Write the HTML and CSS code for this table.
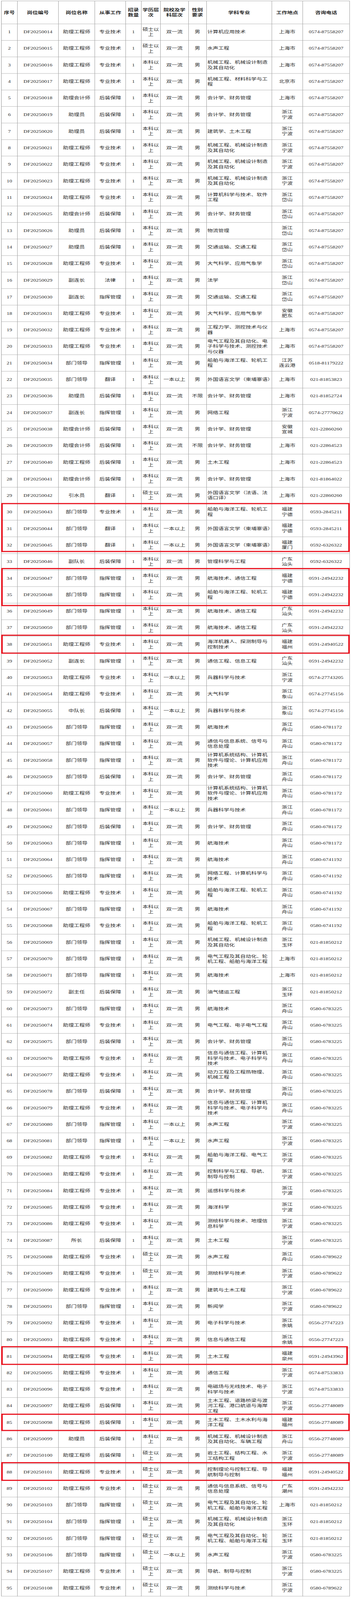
FILE: index.html
```html
<!DOCTYPE html>
<html lang="zh-CN">
<head>
<meta charset="utf-8">
<title>岗位表</title>
<link rel="stylesheet" href="styles.css">
</head>
<body>
<div class="page">
<div class="sheet">
<div class="row head"><div>序号</div><div>岗位编号</div><div>岗位名称</div><div>从事工作</div><div>招录数量</div><div>学历层次</div><div>院校及学<br>科层次</div><div>性别<br>要求</div><div>学科专业</div><div>工作地点</div><div>咨询电话</div></div>
<div class="row"><div>1</div><div>DF20250014</div><div>助理工程师</div><div>专业技术</div><div>1</div><div>硕士以上</div><div>双一流</div><div>男</div><div class="major">计算机应用技术</div><div>上海市</div><div>0574-87558207</div></div>
<div class="row"><div>2</div><div>DF20250015</div><div>助理工程师</div><div>专业技术</div><div>1</div><div>硕士以上</div><div>双一流</div><div>男</div><div class="major">水声工程</div><div>上海市</div><div>0574-87558207</div></div>
<div class="row"><div>3</div><div>DF20250016</div><div>助理工程师</div><div>专业技术</div><div>1</div><div>本科以上</div><div>双一流</div><div>男</div><div class="major">机械工程、机械设计制造及其自动化</div><div>上海市</div><div>0574-87558207</div></div>
<div class="row"><div>4</div><div>DF20250017</div><div>助理工程师</div><div>专业技术</div><div>1</div><div>本科以上</div><div>双一流</div><div>男</div><div class="major">机械工程、材料科学与工程</div><div>北京市</div><div>0574-87558207</div></div>
<div class="row"><div>5</div><div>DF20250018</div><div>助理会计师</div><div>后装保障</div><div>1</div><div>本科以上</div><div>双一流</div><div>男</div><div class="major">会计学、财务管理</div><div>上海市</div><div>0574-87558207</div></div>
<div class="row"><div>6</div><div>DF20250019</div><div>助理员</div><div>后装保障</div><div>1</div><div>本科以上</div><div>双一流</div><div>男</div><div class="major">会计学、财务管理</div><div>浙江<br>宁波</div><div>0574-87558207</div></div>
<div class="row"><div>7</div><div>DF20250020</div><div>助理员</div><div>后装保障</div><div>1</div><div>本科以上</div><div>双一流</div><div>男</div><div class="major">建筑学、土木工程</div><div>浙江<br>宁波</div><div>0574-87558207</div></div>
<div class="row"><div>8</div><div>DF20250021</div><div>助理工程师</div><div>专业技术</div><div>1</div><div>本科以上</div><div>双一流</div><div>男</div><div class="major">机械工程、机械设计制造及其自动化</div><div>浙江<br>宁波</div><div>0574-87558207</div></div>
<div class="row"><div>9</div><div>DF20250022</div><div>助理工程师</div><div>专业技术</div><div>1</div><div>本科以上</div><div>双一流</div><div>男</div><div class="major">机械工程、机械设计制造及其自动化</div><div>浙江<br>宁波</div><div>0574-87558207</div></div>
<div class="row"><div>10</div><div>DF20250023</div><div>助理工程师</div><div>专业技术</div><div>1</div><div>本科以上</div><div>双一流</div><div>男</div><div class="major">机械工程、机械设计制造及其自动化</div><div>浙江<br>宁波</div><div>0574-87558207</div></div>
<div class="row"><div>11</div><div>DF20250024</div><div>助理工程师</div><div>专业技术</div><div>1</div><div>本科以上</div><div>双一流</div><div>男</div><div class="major">计算机科学与技术、软件工程</div><div>浙江<br>岱山</div><div>0574-87558207</div></div>
<div class="row"><div>12</div><div>DF20250025</div><div>助理会计师</div><div>后装保障</div><div>1</div><div>本科以上</div><div>双一流</div><div>男</div><div class="major">会计学、财务管理</div><div>浙江<br>岱山</div><div>0574-87558207</div></div>
<div class="row"><div>13</div><div>DF20250026</div><div>助理员</div><div>后装保障</div><div>1</div><div>本科以上</div><div>双一流</div><div>男</div><div class="major">物流管理</div><div>浙江<br>岱山</div><div>0574-87558207</div></div>
<div class="row"><div>14</div><div>DF20250027</div><div>助理员</div><div>后装保障</div><div>1</div><div>本科以上</div><div>双一流</div><div>男</div><div class="major">交通运输、交通工程</div><div>浙江<br>岱山</div><div>0574-87558207</div></div>
<div class="row"><div>15</div><div>DF20250028</div><div>助理工程师</div><div>专业技术</div><div>1</div><div>本科以上</div><div>双一流</div><div>男</div><div class="major">大气科学、应用气象学</div><div>浙江<br>岱山</div><div>0574-87558207</div></div>
<div class="row"><div>16</div><div>DF20250029</div><div>副连长</div><div>法律</div><div>1</div><div>本科以上</div><div>双一流</div><div>男</div><div class="major">法学</div><div>浙江<br>岱山</div><div>0574-87558207</div></div>
<div class="row"><div>17</div><div>DF20250030</div><div>副连长</div><div>指挥管理</div><div>1</div><div>本科以上</div><div>双一流</div><div>男</div><div class="major">交通运输、交通工程</div><div>浙江<br>岱山</div><div>0574-87558207</div></div>
<div class="row"><div>18</div><div>DF20250031</div><div>助理工程师</div><div>专业技术</div><div>1</div><div>本科以上</div><div>双一流</div><div>男</div><div class="major">大气科学、应用气象学</div><div>安徽<br>肥东</div><div>0574-87558207</div></div>
<div class="row"><div>19</div><div>DF20250032</div><div>助理工程师</div><div>专业技术</div><div>1</div><div>本科以上</div><div>双一流</div><div>男</div><div class="major">工程力学、测控技术与仪器</div><div>上海市</div><div>0574-87558207</div></div>
<div class="row"><div>20</div><div>DF20250033</div><div>助理工程师</div><div>专业技术</div><div>1</div><div>本科以上</div><div>双一流</div><div>男</div><div class="major">电气工程及其自动化、电子科学与技术、测控技术与仪器</div><div>上海市</div><div>0574-87558207</div></div>
<div class="row"><div>21</div><div>DF20250034</div><div>部门领导</div><div>指挥管理</div><div>1</div><div>本科以上</div><div>双一流</div><div>男</div><div class="major">船舶与海洋工程、轮机工程</div><div>江苏<br>连云港</div><div>0518-81179222</div></div>
<div class="row"><div>22</div><div>DF20250035</div><div>部门领导</div><div>翻译</div><div>1</div><div>本科以上</div><div>一本以上</div><div>男</div><div class="major">外国语言文学（柬埔寨语）</div><div>上海市</div><div>021-81853823</div></div>
<div class="row"><div>23</div><div>DF20250036</div><div>助理员</div><div>后装保障</div><div>1</div><div>本科以上</div><div>双一流</div><div>不限</div><div class="major">会计学、财务管理</div><div>上海市</div><div>021-81852724</div></div>
<div class="row"><div>24</div><div>DF20250037</div><div>副连长</div><div>指挥管理</div><div>1</div><div>本科以上</div><div>双一流</div><div>男</div><div class="major">网络工程</div><div>浙江<br>宁波</div><div>0574-27770622</div></div>
<div class="row"><div>25</div><div>DF20250038</div><div>助理会计师</div><div>后装保障</div><div>1</div><div>本科以上</div><div>双一流</div><div>男</div><div class="major">会计学、财务管理</div><div>安徽<br>宣城</div><div>021-22860260</div></div>
<div class="row"><div>26</div><div>DF20250039</div><div>助理会计师</div><div>后装保障</div><div>1</div><div>本科以上</div><div>双一流</div><div>不限</div><div class="major">会计学、财务管理</div><div>上海市</div><div>021-22864523</div></div>
<div class="row"><div>27</div><div>DF20250040</div><div>助理工程师</div><div>后装保障</div><div>1</div><div>本科以上</div><div>双一流</div><div>男</div><div class="major">土木工程</div><div>上海市</div><div>021-22864523</div></div>
<div class="row"><div>28</div><div>DF20250041</div><div>助理会计师</div><div>后装保障</div><div>1</div><div>本科以上</div><div>双一流</div><div>男</div><div class="major">会计学、财务管理</div><div>上海市</div><div>021-81864022</div></div>
<div class="row"><div>29</div><div>DF20250042</div><div>引水员</div><div>翻译</div><div>1</div><div>硕士以上</div><div>双一流</div><div>男</div><div class="major">外国语言文学（法语、法语口译）</div><div>上海市</div><div>021-22860260</div></div>
<div class="flag f1">
<div class="row"><div>30</div><div>DF20250043</div><div>部门领导</div><div>专业技术</div><div>1</div><div>本科以上</div><div>双一流</div><div>男</div><div class="major">船舶与海洋工程、轮机工程</div><div>福建<br>宁德</div><div>0593-2845211</div></div>
<div class="row"><div>31</div><div>DF20250044</div><div>部门领导</div><div>翻译</div><div>1</div><div>本科以上</div><div>一本以上</div><div>男</div><div class="major">外国语言文学（柬埔寨语）</div><div>福建<br>宁德</div><div>0593-2845211</div></div>
<div class="row"><div>32</div><div>DF20250045</div><div>部门领导</div><div>翻译</div><div>1</div><div>本科以上</div><div>一本以上</div><div>男</div><div class="major">外国语言文学（柬埔寨语）</div><div>福建<br>厦门</div><div>0592-6326322</div></div>
</div>
<div class="row"><div>33</div><div>DF20250046</div><div>副队长</div><div>后装保障</div><div>1</div><div>本科以上</div><div>双一流</div><div>男</div><div class="major">管理科学与工程</div><div>广东<br>汕头</div><div>0592-6326322</div></div>
<div class="flag f2">
<div class="row"><div>34</div><div>DF20250047</div><div>部门领导</div><div>指挥管理</div><div>1</div><div>本科以上</div><div>双一流</div><div>男</div><div class="major">航海技术、通信工程</div><div>福建<br>宁德</div><div>0591-24942232</div></div>
<div class="row"><div>35</div><div>DF20250048</div><div>部门领导</div><div>指挥管理</div><div>1</div><div>本科以上</div><div>双一流</div><div>男</div><div class="major">船舶与海洋工程、轮机工程</div><div>福建<br>宁德</div><div>0591-24942232</div></div>
</div>
<div class="row"><div>36</div><div>DF20250049</div><div>部门领导</div><div>指挥管理</div><div>1</div><div>本科以上</div><div>双一流</div><div>男</div><div class="major">航海技术、通信工程</div><div>广东<br>汕头</div><div>0591-24942232</div></div>
<div class="row"><div>37</div><div>DF20250050</div><div>部门领导</div><div>指挥管理</div><div>1</div><div>本科以上</div><div>双一流</div><div>男</div><div class="major">航海技术、通信工程</div><div>广东<br>汕头</div><div>0591-24942232</div></div>
<div class="flag f3">
<div class="row"><div>38</div><div>DF20250051</div><div>助理工程师</div><div>专业技术</div><div>1</div><div>本科以上</div><div>双一流</div><div>男</div><div class="major">海洋机器人、探测制导与控制技术</div><div>福建<br>福州</div><div>0591-24940522</div></div>
</div>
<div class="row"><div>39</div><div>DF20250052</div><div>副连长</div><div>指挥管理</div><div>1</div><div>本科以上</div><div>双一流</div><div>男</div><div class="major">通信工程、信息工程</div><div>广东<br>汕头</div><div>0591-24942232</div></div>
<div class="row"><div>40</div><div>DF20250053</div><div>助理工程师</div><div>专业技术</div><div>1</div><div>本科以上</div><div>一本以上</div><div>男</div><div class="major">兵器科学与技术</div><div>浙江<br>宁波</div><div>0574-27743205</div></div>
<div class="row"><div>41</div><div>DF20250054</div><div>助理工程师</div><div>专业技术</div><div>1</div><div>本科以上</div><div>双一流</div><div>男</div><div class="major">大气科学</div><div>浙江<br>象山</div><div>0574-27745156</div></div>
<div class="row"><div>42</div><div>DF20250055</div><div>中队长</div><div>后装保障</div><div>1</div><div>本科以上</div><div>一本以上</div><div>男</div><div class="major">兵器科学与技术</div><div>浙江<br>象山</div><div>0574-27745156</div></div>
<div class="row"><div>43</div><div>DF20250056</div><div>部门领导</div><div>指挥管理</div><div>1</div><div>本科以上</div><div>双一流</div><div>男</div><div class="major">航海技术</div><div>浙江<br>舟山</div><div>0580-6781172</div></div>
<div class="row"><div>44</div><div>DF20250057</div><div>部门领导</div><div>指挥管理</div><div>1</div><div>本科以上</div><div>双一流</div><div>男</div><div class="major">通信与信息系统、信号与信息处理</div><div>浙江<br>舟山</div><div>0580-6781172</div></div>
<div class="row"><div>45</div><div>DF20250058</div><div>部门领导</div><div>指挥管理</div><div>1</div><div>本科以上</div><div>双一流</div><div>男</div><div class="major">计算机系统结构、计算机软件与理论、计算机应用技术</div><div>浙江<br>舟山</div><div>0580-6781172</div></div>
<div class="row"><div>46</div><div>DF20250059</div><div>部门领导</div><div>后装保障</div><div>1</div><div>本科以上</div><div>双一流</div><div>男</div><div class="major">会计学、财务管理</div><div>浙江<br>舟山</div><div>0580-6781172</div></div>
<div class="row"><div>47</div><div>DF20250060</div><div>助理工程师</div><div>专业技术</div><div>1</div><div>本科以上</div><div>双一流</div><div>男</div><div class="major">计算机系统结构、计算机软件与理论、计算机应用技术</div><div>浙江<br>舟山</div><div>0580-6781172</div></div>
<div class="row"><div>48</div><div>DF20250061</div><div>部门领导</div><div>指挥管理</div><div>1</div><div>本科以上</div><div>一本以上</div><div>男</div><div class="major">兵器科学与技术</div><div>浙江<br>舟山</div><div>0580-6781172</div></div>
<div class="row"><div>49</div><div>DF20250062</div><div>部门领导</div><div>后装保障</div><div>1</div><div>本科以上</div><div>双一流</div><div>男</div><div class="major">会计学、财务管理</div><div>浙江<br>舟山</div><div>0580-6781172</div></div>
<div class="row"><div>50</div><div>DF20250063</div><div>部门领导</div><div>指挥管理</div><div>1</div><div>本科以上</div><div>双一流</div><div>男</div><div class="major">航海技术</div><div>浙江<br>舟山</div><div>0580-6781172</div></div>
<div class="row"><div>51</div><div>DF20250064</div><div>部门领导</div><div>指挥管理</div><div>1</div><div>本科以上</div><div>双一流</div><div>男</div><div class="major">航海技术</div><div>浙江<br>舟山</div><div>0580-6741192</div></div>
<div class="row"><div>52</div><div>DF20250065</div><div>部门领导</div><div>指挥管理</div><div>1</div><div>本科以上</div><div>双一流</div><div>男</div><div class="major">网络工程、计算机科学与技术</div><div>浙江<br>舟山</div><div>0580-6741192</div></div>
<div class="row"><div>53</div><div>DF20250066</div><div>助理工程师</div><div>专业技术</div><div>1</div><div>本科以上</div><div>双一流</div><div>男</div><div class="major">船舶与海洋工程、轮机工程</div><div>浙江<br>舟山</div><div>0580-6741192</div></div>
<div class="row"><div>54</div><div>DF20250067</div><div>部门领导</div><div>指挥管理</div><div>1</div><div>本科以上</div><div>双一流</div><div>男</div><div class="major">航海技术</div><div>浙江<br>舟山</div><div>0580-6741192</div></div>
<div class="row"><div>55</div><div>DF20250068</div><div>助理工程师</div><div>专业技术</div><div>1</div><div>本科以上</div><div>双一流</div><div>男</div><div class="major">船舶与海洋工程、轮机工程</div><div>浙江<br>舟山</div><div>0580-6741192</div></div>
<div class="row"><div>56</div><div>DF20250069</div><div>部门领导</div><div>指挥管理</div><div>1</div><div>本科以上</div><div>双一流</div><div>男</div><div class="major">机械工程、机械设计制造及其自动化</div><div>浙江<br>玉环</div><div>021-81850212</div></div>
<div class="row"><div>57</div><div>DF20250070</div><div>部门领导</div><div>指挥管理</div><div>1</div><div>本科以上</div><div>双一流</div><div>男</div><div class="major">电气工程及其自动化、轮机工程、船舶与海洋工程</div><div>上海市</div><div>021-81850212</div></div>
<div class="row"><div>58</div><div>DF20250071</div><div>部门领导</div><div>指挥管理</div><div>1</div><div>本科以上</div><div>双一流</div><div>男</div><div class="major">航海技术</div><div>上海市</div><div>021-81850212</div></div>
<div class="row"><div>59</div><div>DF20250072</div><div>副主任</div><div>后装保障</div><div>1</div><div>本科以上</div><div>双一流</div><div>男</div><div class="major">油气储运工程</div><div>浙江<br>玉环</div><div>021-81850212</div></div>
<div class="row"><div>60</div><div>DF20250073</div><div>部门领导</div><div>指挥管理</div><div>1</div><div>本科以上</div><div>双一流</div><div>男</div><div class="major">航海技术</div><div>浙江<br>舟山</div><div>0580-6783225</div></div>
<div class="row"><div>61</div><div>DF20250074</div><div>助理工程师</div><div>专业技术</div><div>1</div><div>本科以上</div><div>双一流</div><div>男</div><div class="major">电气工程、电子电气工程</div><div>浙江<br>舟山</div><div>0580-6783225</div></div>
<div class="row"><div>62</div><div>DF20250075</div><div>部门领导</div><div>后装保障</div><div>1</div><div>本科以上</div><div>双一流</div><div>男</div><div class="major">会计学、财务管理</div><div>浙江<br>舟山</div><div>0580-6783225</div></div>
<div class="row"><div>63</div><div>DF20250076</div><div>助理工程师</div><div>专业技术</div><div>1</div><div>本科以上</div><div>双一流</div><div>男</div><div class="major">信息与通信工程、计算机科学与技术、电子科学与技术</div><div>浙江<br>舟山</div><div>0580-6783225</div></div>
<div class="row"><div>64</div><div>DF20250077</div><div>助理工程师</div><div>专业技术</div><div>1</div><div>本科以上</div><div>双一流</div><div>男</div><div class="major">动力工程及工程热物理、机械工程</div><div>浙江<br>舟山</div><div>0580-6783225</div></div>
<div class="row"><div>65</div><div>DF20250078</div><div>部门领导</div><div>后装保障</div><div>1</div><div>本科以上</div><div>双一流</div><div>男</div><div class="major">会计学、财务管理</div><div>浙江<br>舟山</div><div>0580-6783225</div></div>
<div class="row"><div>66</div><div>DF20250079</div><div>助理工程师</div><div>专业技术</div><div>1</div><div>本科以上</div><div>双一流</div><div>男</div><div class="major">信息与通信工程、计算机科学与技术、电子科学与技术</div><div>浙江<br>舟山</div><div>0580-6783225</div></div>
<div class="row"><div>67</div><div>DF20250080</div><div>部门领导</div><div>指挥管理</div><div>1</div><div>本科以上</div><div>一本以上</div><div>男</div><div class="major">水声工程</div><div>浙江<br>宁波</div><div>0580-6783225</div></div>
<div class="row"><div>68</div><div>DF20250081</div><div>部门领导</div><div>指挥管理</div><div>1</div><div>本科以上</div><div>一本以上</div><div>男</div><div class="major">水声工程</div><div>浙江<br>宁波</div><div>0580-6783225</div></div>
<div class="row"><div>69</div><div>DF20250082</div><div>助理工程师</div><div>专业技术</div><div>1</div><div>本科以上</div><div>双一流</div><div>男</div><div class="major">船舶与海洋工程、电气工程</div><div>浙江<br>宁波</div><div>0580-6783225</div></div>
<div class="row"><div>70</div><div>DF20250083</div><div>助理工程师</div><div>专业技术</div><div>1</div><div>本科以上</div><div>双一流</div><div>男</div><div class="major">控制科学与工程、导航、制导与控制</div><div>浙江<br>宁波</div><div>0580-6783225</div></div>
<div class="row"><div>71</div><div>DF20250084</div><div>助理工程师</div><div>专业技术</div><div>1</div><div>本科以上</div><div>双一流</div><div>男</div><div class="major">遥感科学与技术</div><div>浙江<br>宁波</div><div>0580-6783225</div></div>
<div class="row"><div>72</div><div>DF20250085</div><div>助理工程师</div><div>专业技术</div><div>1</div><div>本科以上</div><div>双一流</div><div>男</div><div class="major">海洋科学</div><div>浙江<br>宁波</div><div>0580-6783225</div></div>
<div class="row"><div>73</div><div>DF20250086</div><div>助理工程师</div><div>专业技术</div><div>1</div><div>本科以上</div><div>双一流</div><div>男</div><div class="major">测绘科学与技术、地理信息科学</div><div>浙江<br>宁波</div><div>0580-6783225</div></div>
<div class="row"><div>74</div><div>DF20250087</div><div>所长</div><div>后装保障</div><div>1</div><div>本科以上</div><div>双一流</div><div>男</div><div class="major">土木工程</div><div>浙江<br>宁波</div><div>0580-6783225</div></div>
<div class="row"><div>75</div><div>DF20250088</div><div>助理工程师</div><div>专业技术</div><div>1</div><div>硕士以上</div><div>双一流</div><div>男</div><div class="major">水声工程</div><div>浙江<br>舟山</div><div>0580-6789622</div></div>
<div class="row"><div>76</div><div>DF20250089</div><div>助理工程师</div><div>专业技术</div><div>1</div><div>硕士以上</div><div>双一流</div><div>男</div><div class="major">测绘科学与技术</div><div>浙江<br>宁波</div><div>0580-6789622</div></div>
<div class="row"><div>77</div><div>DF20250090</div><div>助理工程师</div><div>专业技术</div><div>1</div><div>本科以上</div><div>双一流</div><div>男</div><div class="major">建筑与土木工程</div><div>浙江<br>宁波</div><div>0580-6789622</div></div>
<div class="row"><div>78</div><div>DF20250091</div><div>部门领导</div><div>指挥管理</div><div>1</div><div>本科以上</div><div>双一流</div><div>男</div><div class="major">新闻学</div><div>浙江<br>宁波</div><div>0580-6789622</div></div>
<div class="row"><div>79</div><div>DF20250092</div><div>助理工程师</div><div>专业技术</div><div>1</div><div>本科以上</div><div>双一流</div><div>男</div><div class="major">电子科学与技术</div><div>浙江<br>余姚</div><div>0556-27747223</div></div>
<div class="row"><div>80</div><div>DF20250093</div><div>助理工程师</div><div>专业技术</div><div>1</div><div>本科以上</div><div>双一流</div><div>男</div><div class="major">信息与通信工程</div><div>浙江<br>余姚</div><div>0556-27747223</div></div>
<div class="flag f4">
<div class="row"><div>81</div><div>DF20250094</div><div>助理工程师</div><div>专业技术</div><div>1</div><div>本科以上</div><div>双一流</div><div>男</div><div class="major">土木工程</div><div>福建<br>泉州</div><div>0591-24943962</div></div>
</div>
<div class="row"><div>82</div><div>DF20250095</div><div>助理工程师</div><div>专业技术</div><div>1</div><div>本科以上</div><div>双一流</div><div>男</div><div class="major">通信工程</div><div>浙江<br>宁波</div><div>0574-87533833</div></div>
<div class="row"><div>83</div><div>DF20250096</div><div>助理工程师</div><div>专业技术</div><div>1</div><div>本科以上</div><div>双一流</div><div>男</div><div class="major">电磁场与无线技术、电子科学与技术</div><div>浙江<br>宁波</div><div>0574-87533833</div></div>
<div class="row"><div>84</div><div>DF20250097</div><div>助理工程师</div><div>后装保障</div><div>1</div><div>本科以上</div><div>双一流</div><div>男</div><div class="major">土木工程、道路桥梁与渡河工程、港口航道与海岸工程</div><div>浙江<br>宁波</div><div>0556-27748089</div></div>
<div class="flag f5">
<div class="row"><div>85</div><div>DF20250098</div><div>助理工程师</div><div>后装保障</div><div>1</div><div>本科以上</div><div>双一流</div><div>男</div><div class="major">土木工程、土木水利与海洋工程</div><div>福建<br>福州</div><div>0556-27748089</div></div>
</div>
<div class="row"><div>86</div><div>DF20250099</div><div>助理员</div><div>后装保障</div><div>1</div><div>本科以上</div><div>双一流</div><div>男</div><div class="major">机械工程、机械设计制造及其自动化、车辆工程</div><div>浙江<br>舟山</div><div>0556-27748089</div></div>
<div class="row"><div>87</div><div>DF20250100</div><div>助理工程师</div><div>后装保障</div><div>1</div><div>硕士以上</div><div>双一流</div><div>男</div><div class="major">岩土工程、结构工程、水工结构工程</div><div>浙江<br>宁波</div><div>0556-27748089</div></div>
<div class="flag f6">
<div class="row"><div>88</div><div>DF20250101</div><div>助理工程师</div><div>专业技术</div><div>1</div><div>硕士以上</div><div>双一流</div><div>男</div><div class="major">控制理论与控制工程、导航制导与控制</div><div>福建<br>福州</div><div>0591-24940522</div></div>
</div>
<div class="row"><div>89</div><div>DF20250102</div><div>助理工程师</div><div>专业技术</div><div>1</div><div>硕士以上</div><div>双一流</div><div>男</div><div class="major">通信与信息系统、信号与信息处理</div><div>广东<br>潮州</div><div>0591-24942232</div></div>
<div class="row"><div>90</div><div>DF20250103</div><div>部门领导</div><div>指挥管理</div><div>1</div><div>硕士以上</div><div>双一流</div><div>男</div><div class="major">电气工程及其自动化、轮机工程、船舶与海洋工程</div><div>上海市</div><div>021-81850212</div></div>
<div class="row"><div>91</div><div>DF20250104</div><div>部门领导</div><div>指挥管理</div><div>1</div><div>硕士以上</div><div>双一流</div><div>男</div><div class="major">机械工程、机械设计制造及其自动化</div><div>浙江<br>玉环</div><div>021-81850212</div></div>
<div class="row"><div>92</div><div>DF20250105</div><div>部门领导</div><div>指挥管理</div><div>1</div><div>硕士以上</div><div>双一流</div><div>男</div><div class="major">电气工程及其自动化、轮机工程、船舶与海洋工程</div><div>浙江<br>玉环</div><div>021-81850212</div></div>
<div class="row"><div>93</div><div>DF20250106</div><div>部门领导</div><div>指挥管理</div><div>1</div><div>硕士以上</div><div>一本以上</div><div>男</div><div class="major">水声工程</div><div>浙江<br>宁波</div><div>0580-6783225</div></div>
<div class="row"><div>94</div><div>DF20250107</div><div>助理工程师</div><div>专业技术</div><div>1</div><div>硕士以上</div><div>双一流</div><div>男</div><div class="major">导航、制导与控制</div><div>浙江<br>宁波</div><div>0580-6783225</div></div>
<div class="row"><div>95</div><div>DF20250108</div><div>助理工程师</div><div>专业技术</div><div>1</div><div>硕士以上</div><div>双一流</div><div>男</div><div class="major">测绘科学与技术</div><div>浙江<br>宁波</div><div>0580-6789622</div></div>
</div>
</div>
</body>
</html>
```
FILE: styles.css
```css
html, body {
  margin: 0;
  padding: 0;
  background: #ffffff;
}

body {
  font-family: "Liberation Serif", "Noto Sans CJK SC", serif;
  font-size: 14px;
  line-height: 19px;
  color: #2b2b2b;
}

/* The photographing window is only 4096px tall, so the 5712px-tall sheet is
   drawn squeezed to that height (4096 / 5712); the page box keeps the
   document to the window height. */
.page {
  height: 4096px;
  overflow: hidden;
}

.sheet {
  width: 892px;
  margin: 2px 0 0 3px;
  border-top: 1px solid #8f8f8f;
  border-left: 1px solid #8f8f8f;
  box-sizing: border-box;
  transform: scaleY(0.717087);
  transform-origin: 0 0;
}

.row {
  display: grid;
  grid-template-columns: 41px 105px 93px 79px 39.5px 49.5px 71.5px 46px 167.5px 78.5px 120.5px;
  grid-template-rows: 59.1px;
  height: 59.1px;
  box-sizing: border-box;
}

.row > div {
  box-sizing: border-box;
  min-height: 0;
  min-width: 0;
  border-right: 1px solid #9a9a9a;
  border-bottom: 1px solid #9a9a9a;
  display: flex;
  flex-direction: column;
  align-items: center;
  justify-content: center;
  text-align: center;
  padding: 0 2px;
}

.row > div.major {
  align-items: flex-start;
  text-align: left;
  padding: 0 1px 0 2px;
}

.row.head {
  grid-template-rows: 81.5px;
  height: 81.5px;
}

.row.head > div {
  font-family: "Noto Sans CJK SC", sans-serif;
  font-weight: 700;
  font-size: 14px;
  line-height: 18px;
  color: #1e1e1e;
}

.flag {
  position: relative;
}

.flag::after {
  content: "";
  position: absolute;
  left: -1px;
  right: 0;
  top: -3px;
  bottom: -2px;
  border: 4px solid #e8101c;
  pointer-events: none;
  z-index: 2;
}

.flag.f1::after { top: -3px; bottom: 6px; }
.flag.f2::after { top: -8px; bottom: -10px; }
.flag.f3::after { top: -6px; bottom: -3px; }
.flag.f4::after { top: -7px; bottom: -1px; right: 5px; }
.flag.f5::after { top: -2px; bottom: -1px; }
.flag.f6::after { top: -7px; bottom: -1px; }
```
